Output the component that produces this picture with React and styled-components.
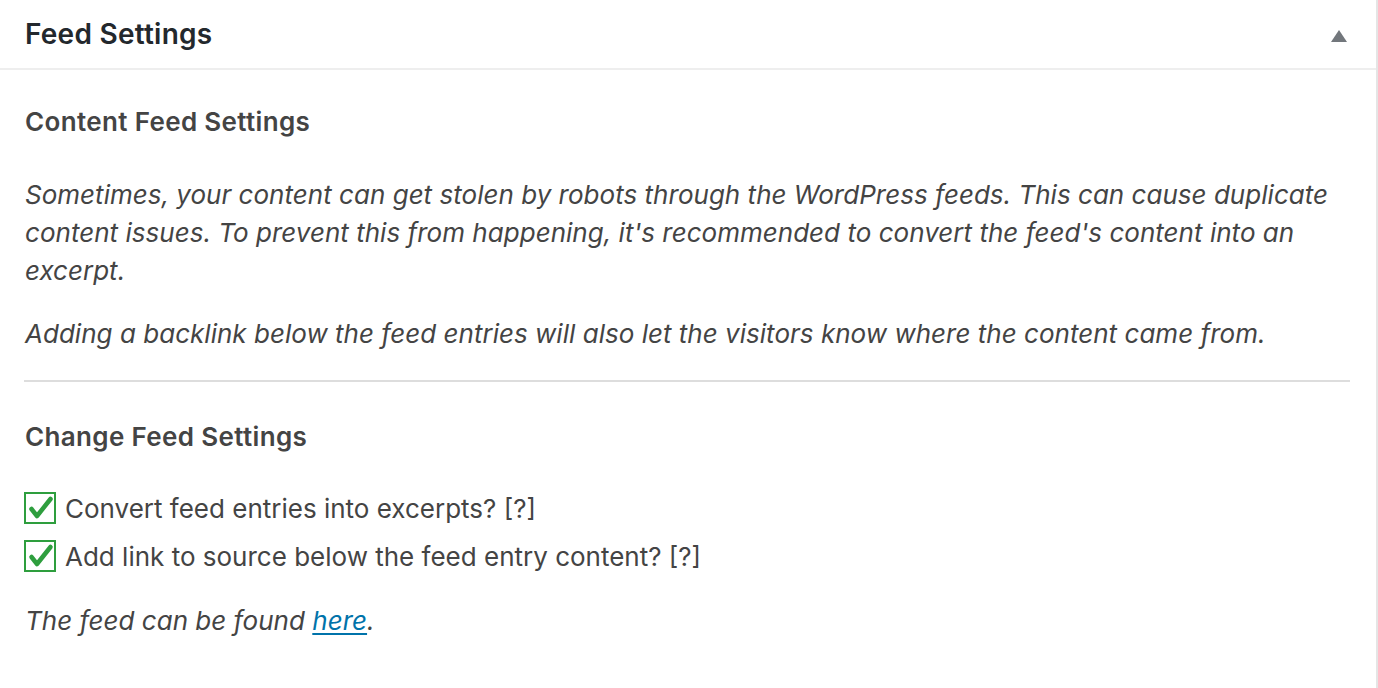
import React, { useState } from "react";
import styled, { createGlobalStyle } from "styled-components";

const GlobalStyle = createGlobalStyle`
  html, body {
    margin: 0;
    padding: 0;
    background: #fff;
  }
  body {
    font-family: Inter, "Noto Sans", "Liberation Sans", sans-serif;
  }
`;

const Postbox = styled.div`
  background: #fff;
  border-right: 2px solid #e5e5e5;
  min-height: 688px;
  box-sizing: border-box;
`;

const Header = styled.div`
  height: 68px;
  display: flex;
  align-items: center;
  justify-content: space-between;
  padding: 0 28px 0 25px;
  border-bottom: 2px solid #eeeeee;
`;

const Title = styled.h2`
  margin: 0;
  font-size: 28px;
  font-weight: 600;
  color: #23282d;
  letter-spacing: 0.25px;
`;

const Toggle = styled.button`
  border: 0;
  background: none;
  padding: 0;
  width: 18px;
  height: 14px;
  cursor: pointer;
  display: flex;
  align-items: center;
  justify-content: center;
  margin-top: 4px;
  &::before {
    content: "";
    border-left: 8px solid transparent;
    border-right: 8px solid transparent;
    border-bottom: 12px solid #72777c;
    transform: rotate(${(p) => (p.open ? 0 : 180)}deg);
  }
`;

const Inside = styled.div`
  padding: 34px 26px 24px 25px;
  color: #444;
`;

const Heading = styled.h3`
  margin: ${(p) => p.top || 0}px 0 0;
  font-size: 26px;
  line-height: 36px;
  font-weight: 600;
  color: #444;
  letter-spacing: 0.35px;
`;

const Text = styled.p`
  margin: ${(p) => p.top || 0}px 0 0;
  font-size: 26px;
  line-height: 38px;
  font-style: italic;
  color: #444;
  letter-spacing: 0.02px;
`;

const Divider = styled.hr`
  margin: 27px 0 0 -1px;
  border: 0;
  height: 2px;
  background: #dddddd;
`;

const Options = styled.div`
  margin-top: 29px;
  display: flex;
  flex-direction: column;
`;

const Option = styled.label`
  display: flex;
  align-items: center;
  height: 48px;
  gap: 9px;
  font-size: 26px;
  color: #444;
  cursor: pointer;
`;

const Box = styled.span`
  width: 32px;
  height: 32px;
  box-sizing: border-box;
  border: 2px solid #2e9e3e;
  display: flex;
  align-items: center;
  justify-content: center;
  margin-left: -1px;
  background: #fff;
`;

const Link = styled.a`
  color: #0073aa;
  text-decoration: underline;
  text-underline-offset: 3px;
  text-decoration-thickness: 2px;
`;

const Check = ({ checked }) => (
  <Box>
    {checked && (
      <svg width="28" height="28" viewBox="0 0 28 28">
        <path
          d="M5.5 15 L11 22 L24.5 5"
          fill="none"
          stroke="#2e9e3e"
          strokeWidth="4.5"
          strokeLinecap="round"
          strokeLinejoin="round"
        />
      </svg>
    )}
  </Box>
);

const App = () => {
  const [open, setOpen] = useState(true);
  const [excerpts, setExcerpts] = useState(true);
  const [backlink, setBacklink] = useState(true);

  return (
    <>
      <GlobalStyle />
      <Postbox>
        <Header>
          <Title>Feed Settings</Title>
          <Toggle open={open} onClick={() => setOpen(!open)} aria-label="Toggle panel" />
        </Header>
        {open && (
          <Inside>
            <Heading>Content Feed Settings</Heading>
            <Text top={36}>
              Sometimes, your content can get stolen by robots through the WordPress feeds. This can cause duplicate
              content issues. To prevent this from happening, it's recommended to convert the feed's content into an
              excerpt.
            </Text>
            <Text top={25}>
              Adding a backlink below the feed entries will also let the visitors know where the content came from.
            </Text>
            <Divider />
            <Heading top={37}>Change Feed Settings</Heading>
            <Options>
              <Option onClick={() => setExcerpts(!excerpts)}>
                <Check checked={excerpts} />
                Convert feed entries into excerpts? [?]
              </Option>
              <Option onClick={() => setBacklink(!backlink)}>
                <Check checked={backlink} />
                Add link to source below the feed entry content? [?]
              </Option>
            </Options>
            <Text top={22}>
              The feed can be found <Link href="#">here</Link>.
            </Text>
          </Inside>
        )}
      </Postbox>
    </>
  );
};

export default App;
